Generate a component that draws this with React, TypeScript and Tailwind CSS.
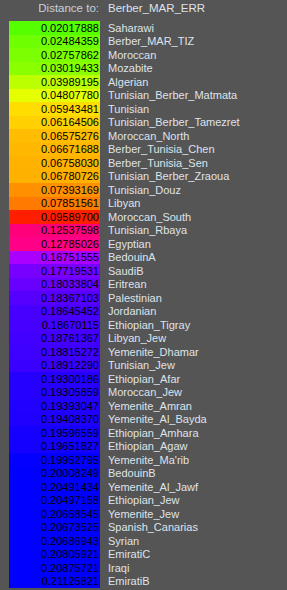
const target = "Berber_MAR_ERR";

const rows: [string, number][] = [
  ["Saharawi", 0.02017888],
  ["Berber_MAR_TIZ", 0.02484359],
  ["Moroccan", 0.02757862],
  ["Mozabite", 0.03019433],
  ["Algerian", 0.03989195],
  ["Tunisian_Berber_Matmata", 0.0480778],
  ["Tunisian", 0.05943481],
  ["Tunisian_Berber_Tamezret", 0.06164506],
  ["Moroccan_North", 0.06575276],
  ["Berber_Tunisia_Chen", 0.06671688],
  ["Berber_Tunisia_Sen", 0.0675803],
  ["Tunisian_Berber_Zraoua", 0.06780726],
  ["Tunisian_Douz", 0.07393169],
  ["Libyan", 0.07851561],
  ["Moroccan_South", 0.095897],
  ["Tunisian_Rbaya", 0.12537598],
  ["Egyptian", 0.12785026],
  ["BedouinA", 0.16751555],
  ["SaudiB", 0.17719531],
  ["Eritrean", 0.18033804],
  ["Palestinian", 0.18367103],
  ["Jordanian", 0.18645452],
  ["Ethiopian_Tigray", 0.18670115],
  ["Libyan_Jew", 0.18761367],
  ["Yemenite_Dhamar", 0.18815272],
  ["Tunisian_Jew", 0.1891229],
  ["Ethiopian_Afar", 0.19300186],
  ["Moroccan_Jew", 0.19305859],
  ["Yemenite_Amran", 0.19393047],
  ["Yemenite_Al_Bayda", 0.1940837],
  ["Ethiopian_Amhara", 0.19596559],
  ["Ethiopian_Agaw", 0.19651827],
  ["Yemenite_Ma'rib", 0.19952795],
  ["BedouinB", 0.20008249],
  ["Yemenite_Al_Jawf", 0.20491434],
  ["Ethiopian_Jew", 0.20497158],
  ["Yemenite_Jew", 0.20658545],
  ["Spanish_Canarias", 0.20673525],
  ["Syrian", 0.20686943],
  ["EmiratiC", 0.20805921],
  ["Iraqi", 0.20875721],
  ["EmiratiB", 0.21125821],
];

// green -> yellow -> red -> magenta -> blue, clamped at blue
function cellColor(v: number) {
  let hue = 100 - ((v - 0.0201) / 0.18) * 220;
  if (hue < -120) hue = -120;
  return `hsl(${(hue + 360) % 360}, 100%, 50%)`;
}

export default function App() {
  return (
    <div
      className="w-[287px] h-[590px] overflow-hidden bg-[#555555] pl-[9px]"
      style={{ fontFamily: '"Liberation Sans", Arial, sans-serif' }}
    >
      <div className="flex h-[21px] items-start pt-[1px] text-[11.5px] leading-[14px]">
        <div className="w-[91px] pr-[1px] text-right text-[#c9d0db]">Distance to:</div>
        <div className="ml-[8px] text-[#dfe3ea]">{target}</div>
      </div>
      <div className="flex flex-col">
        {rows.map(([name, v]) => (
          <div key={name} className="flex h-[13.5px] items-center text-[11px]">
            <div
              className="flex h-full w-[91px] items-center justify-end pr-[1px] text-black"
              style={{ backgroundColor: cellColor(v) }}
            >
              {v.toFixed(8)}
            </div>
            <div className="ml-[8px] whitespace-nowrap text-[#dfe3ea]">{name}</div>
          </div>
        ))}
      </div>
    </div>
  );
}
